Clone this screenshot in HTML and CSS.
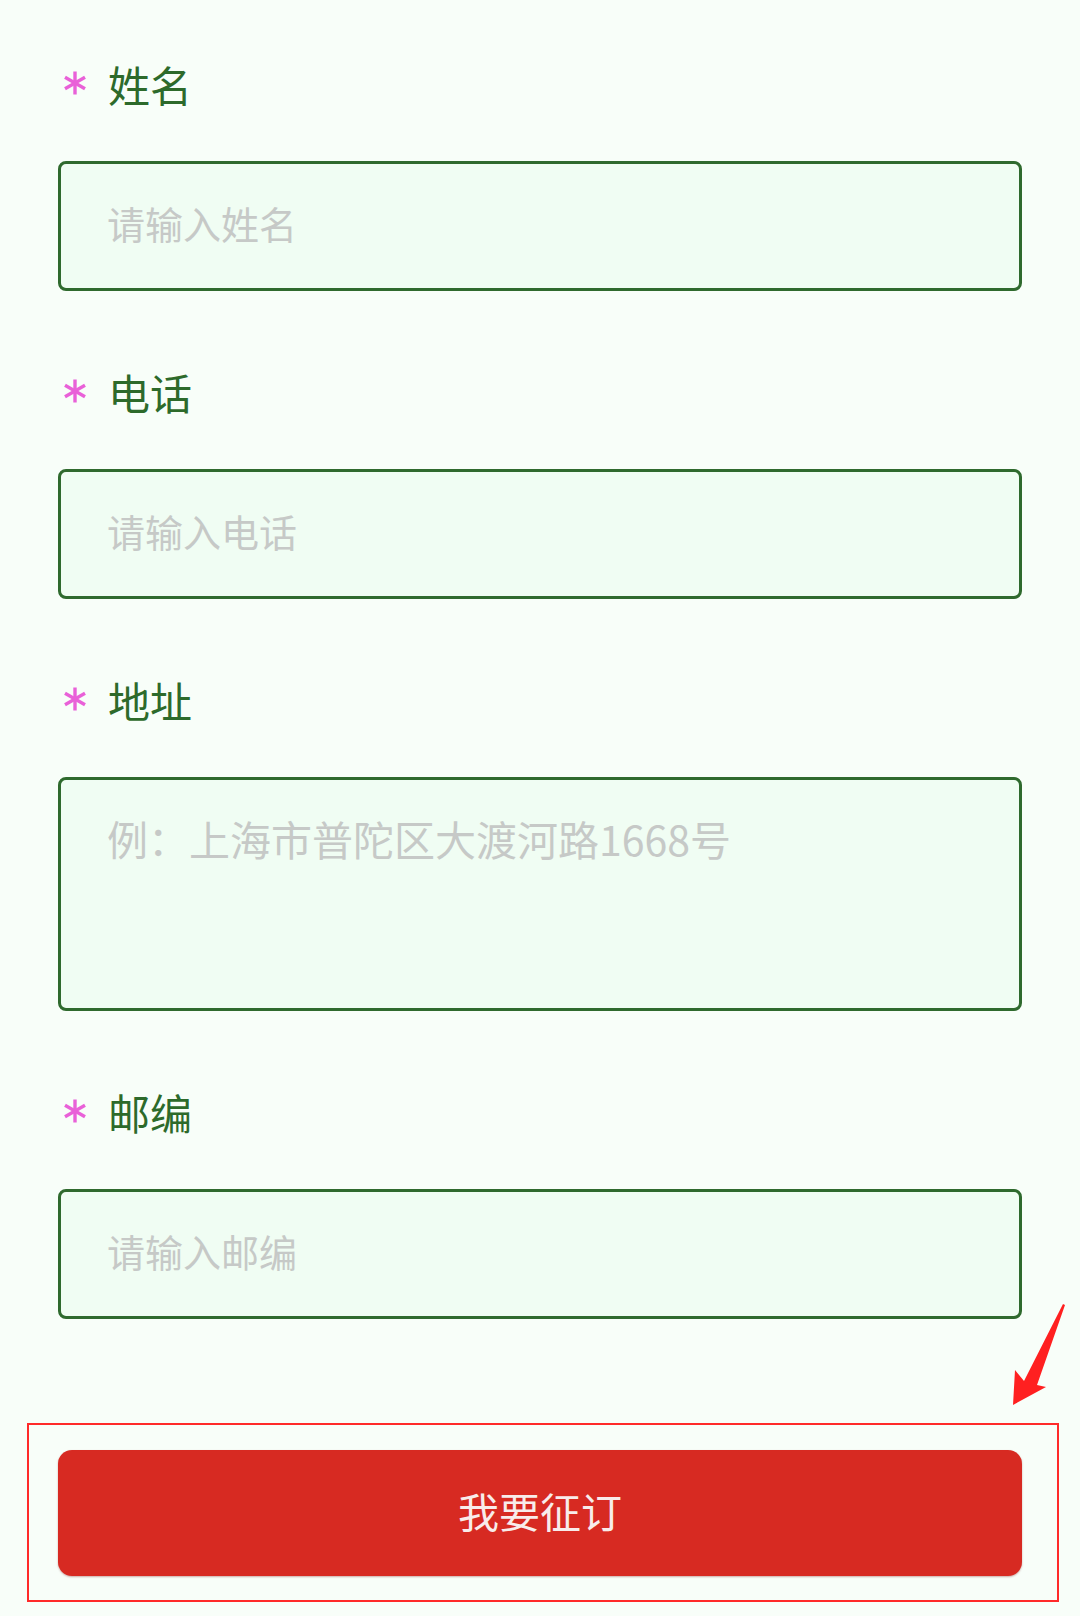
FILE: index.html
```html
<!DOCTYPE html>
<html lang="zh-CN">
<head>
<meta charset="utf-8">
<title>征订</title>
<link rel="stylesheet" href="styles.css">
</head>
<body>
<main class="form">
  <div class="field">
    <div class="label">
      <svg class="star" viewBox="0 0 26 24" width="26" height="24"><g stroke="#e961d8" stroke-width="3.4"><line x1="13" y1="0.5" x2="13" y2="23.5"/><line x1="3" y1="6.2" x2="23" y2="17.8"/><line x1="3" y1="17.8" x2="23" y2="6.2"/></g></svg>
      <span class="label-text">姓名</span>
    </div>
    <input class="box" type="text" placeholder="请输入姓名">
  </div>
  <div class="field">
    <div class="label">
      <svg class="star" viewBox="0 0 26 24" width="26" height="24"><g stroke="#e961d8" stroke-width="3.4"><line x1="13" y1="0.5" x2="13" y2="23.5"/><line x1="3" y1="6.2" x2="23" y2="17.8"/><line x1="3" y1="17.8" x2="23" y2="6.2"/></g></svg>
      <span class="label-text">电话</span>
    </div>
    <input class="box" type="text" placeholder="请输入电话">
  </div>
  <div class="field">
    <div class="label">
      <svg class="star" viewBox="0 0 26 24" width="26" height="24"><g stroke="#e961d8" stroke-width="3.4"><line x1="13" y1="0.5" x2="13" y2="23.5"/><line x1="3" y1="6.2" x2="23" y2="17.8"/><line x1="3" y1="17.8" x2="23" y2="6.2"/></g></svg>
      <span class="label-text">地址</span>
    </div>
    <textarea class="box area" placeholder="例：上海市普陀区大渡河路1668号"></textarea>
  </div>
  <div class="field">
    <div class="label">
      <svg class="star" viewBox="0 0 26 24" width="26" height="24"><g stroke="#e961d8" stroke-width="3.4"><line x1="13" y1="0.5" x2="13" y2="23.5"/><line x1="3" y1="6.2" x2="23" y2="17.8"/><line x1="3" y1="17.8" x2="23" y2="6.2"/></g></svg>
      <span class="label-text">邮编</span>
    </div>
    <input class="box" type="text" placeholder="请输入邮编">
  </div>
  <button class="submit" type="button">我要征订</button>
</main>
<div class="mark-box"></div>
<svg class="mark-arrow" viewBox="0 0 70 110" width="70" height="110">
  <polygon points="53,1 55,2 27,82 36,84 3,102 5,67 14,78" fill="#ff2020"/>
</svg>
</body>
</html>
```
FILE: styles.css
```css
html, body {
  margin: 0;
  padding: 0;
}
body {
  background: #f8fef9;
  width: 1080px;
  height: 1616px;
  position: relative;
  overflow: hidden;
  font-family: "Noto Sans CJK SC", "Noto Sans", sans-serif;
}
.form {
  padding: 57px 58px 0 58px;
  display: flex;
  flex-direction: column;
}
.field {
  display: flex;
  flex-direction: column;
  margin-bottom: 74px;
}
.field:last-of-type {
  margin-bottom: 131px;
}
.label {
  height: 60px;
  display: flex;
  align-items: center;
  margin-bottom: 44px;
}
.star {
  margin-left: 4px;
  margin-right: 20px;
  margin-top: -8px;
  display: block;
}
.label-text {
  font-size: 42px;
  line-height: 54px;
  padding-bottom: 6px;
  color: #2d6a2b;
}
.box {
  box-sizing: border-box;
  width: 964px;
  height: 130px;
  border: 3px solid #2f6a2e;
  border-radius: 8px;
  background: #f0fdf3;
  padding: 0 0 8px 46px;
  margin: 0;
  font-family: "Noto Sans CJK SC", "Noto Sans", sans-serif;
  font-size: 38px;
  color: #333;
  outline: none;
}
.box::placeholder {
  color: #c6c9c7;
}
.area {
  height: 234px;
  resize: none;
  font-size: 41px;
  line-height: 50px;
  padding-top: 33px;
  padding-bottom: 0;
  display: block;
}
.submit {
  width: 964px;
  height: 126px;
  border: none;
  border-radius: 14px;
  background: #d72a22;
  color: #f8eceb;
  font-family: "Noto Sans CJK SC", "Noto Sans", sans-serif;
  font-size: 41px;
  padding: 0 0 6px 0;
  box-shadow: 0 1px 2px rgba(120, 20, 20, 0.35);
}
.mark-box {
  position: absolute;
  left: 27px;
  top: 1423px;
  width: 1028px;
  height: 175px;
  border: 2px solid #ff2a2a;
}
.mark-arrow {
  position: absolute;
  left: 1010px;
  top: 1303px;
}
```
